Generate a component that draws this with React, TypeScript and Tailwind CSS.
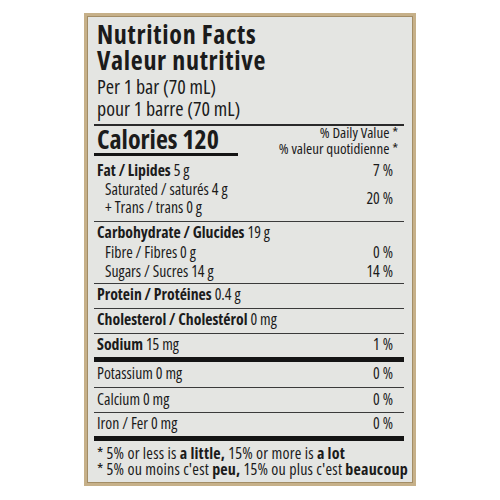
const font = "font-['Open_Sans',Arial,sans-serif] [font-stretch:75%]";

const Thin = () => <div className="h-px bg-[#3a3a3a]" />;
const Thick = () => <div className="h-[5px] bg-[#141414]" />;

const Row = ({ bold, rest, pct }: { bold: string; rest?: string; pct?: string }) => (
	<div className="flex h-[24px] items-start justify-between pl-[3px] pr-[11px] leading-[21px]">
		<span>
			<span className="font-bold">{bold}</span>
			{rest && <span> {rest}</span>}
		</span>
		{pct && <span>{pct}</span>}
	</div>
);

const App = () => {
	return (
		<div className={`h-[500px] w-[500px] bg-white pl-[84px] pt-[13px] text-[#1b1b1b] ${font}`}>
			<div className="h-[473px] w-[332px] border-[3px] border-[#c6b089] bg-[#e4e5e2] shadow-[inset_0_0_0_1px_#a38d66]">
				<div className="pl-[7px] pr-[9px] pt-[5px]">
					<div className="pl-[3px]">
						<h1 className="text-[26px] font-bold leading-[26px] tracking-[0.7px]">
							Nutrition Facts
							<br />
							Valeur nutritive
						</h1>
						<div className="mt-[3px] text-[20px] leading-[22px]">
							Per 1 bar (70 mL)
							<br />
							pour 1 barre (70 mL)
						</div>
					</div>
					<div className="mt-[4px] h-[1.5px] bg-[#2a2a2a]" />

					{/* calories */}
					<div className="flex items-start justify-between">
						<div className="w-[144px]">
							<div className="whitespace-nowrap pl-[3px] text-[26px] font-bold leading-[27px]">
								Calories 120
							</div>
							<div className="h-[3px] bg-[#141414]" />
						</div>
						<div className="-mt-[2px] pr-[6px] text-right text-[15px] leading-[16px]">
							% Daily Value *
							<br />% valeur quotidienne *
						</div>
					</div>

					<div className="text-[15.75px]">
						<div className="flex justify-between pl-[3px] pr-[11px] pt-[4px]">
							<div>
								<div className="leading-[20px]">
									<span className="font-bold">Fat / Lipides</span> 5 g
								</div>
								<div className="pl-[8px] leading-[18.5px]">
									Saturated / saturés 4 g
									<br />+ Trans / trans 0 g
								</div>
							</div>
							<div className="flex flex-col items-end leading-[20px]">
								<span>7 %</span>
								<span className="mt-[8px]">20 %</span>
							</div>
						</div>
						<div className="mt-[4px]" />
						<Thin />

						<div className="flex justify-between pb-[3px] pl-[3px] pr-[11px]">
							<div>
								<div className="leading-[20px]">
									<span className="font-bold">Carbohydrate / Glucides</span> 19 g
								</div>
								<div className="pl-[8px] leading-[20px]">Fibre / Fibres 0 g</div>
								<div className="pl-[8px] leading-[18px]">Sugars / Sucres 14 g</div>
							</div>
							<div className="flex flex-col items-end">
								<span className="mt-[20px] leading-[20px]">0 %</span>
								<span className="leading-[18px]">14 %</span>
							</div>
						</div>
						<Thin />
						<Row bold="Protein / Protéines" rest="0.4 g" />
						<Thin />
						<Row bold="Cholesterol / Cholestérol" rest="0 mg" />
						<Thin />
						<div className="h-[23px]">
							<Row bold="Sodium" rest="15 mg" pct="1 %" />
						</div>
						<Thick />
						<div className="flex h-[25px] justify-between pl-[3px] pr-[11px] pt-[1px] leading-[21px]">
							<span>Potassium 0 mg</span>
							<span>0 %</span>
						</div>
						<Thin />
						<div className="flex h-[24px] justify-between pl-[3px] pr-[11px] pt-[1px] leading-[21px]">
							<span>Calcium 0 mg</span>
							<span>0 %</span>
						</div>
						<Thin />
						<div className="flex h-[23px] justify-between pl-[3px] pr-[11px] leading-[21px]">
							<span>Iron / Fer 0 mg</span>
							<span>0 %</span>
						</div>
						<Thick />
					</div>

					<div className="pl-[3px] pt-[4px] text-[16px] leading-[16px] tracking-[0.2px]">
						<div>
							* 5% or less is <b>a little,</b> 15% or more is <b>a lot</b>
						</div>
						<div className="whitespace-nowrap">
							* 5% ou moins c'est <b>peu,</b> 15% ou plus c'est <b>beaucoup</b>
						</div>
					</div>
				</div>
			</div>
		</div>
	);
};

export default App;
